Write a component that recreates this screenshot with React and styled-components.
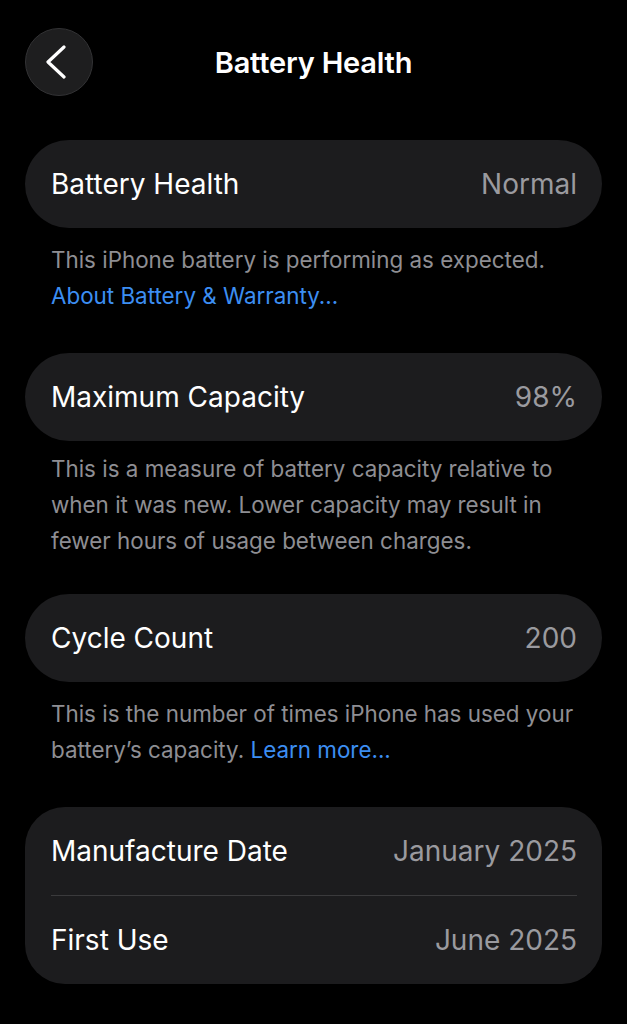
import React from 'react';
import styled, { createGlobalStyle } from 'styled-components';

const GlobalStyle = createGlobalStyle`
    html, body {
        margin: 0;
        padding: 0;
        background: #000;
    }
    body {
        font-family: Inter, "Noto Sans", sans-serif;
        -webkit-font-smoothing: antialiased;
    }
`;

const Screen = styled.div`
    width: 627px;
    min-height: 1024px;
    background: #000;
    color: #fff;
    box-sizing: border-box;
    padding: 28px 25px 0 25px;
`;

const NavBar = styled.div`
    position: relative;
    height: 68px;
    display: flex;
    align-items: center;
    justify-content: center;
    margin-bottom: 44px;
`;

const BackButton = styled.button`
    position: absolute;
    left: 0;
    top: 0;
    width: 68px;
    height: 68px;
    border-radius: 50%;
    background: #1e1e1f;
    border: 1px solid #323234;
    display: flex;
    align-items: center;
    justify-content: center;
    padding: 0;
    padding-right: 4px;
    cursor: pointer;
`;

const Title = styled.h1`
    margin: 0;
    font-size: 29px;
    font-weight: 600;
    letter-spacing: -0.2px;
`;

const Card = styled.div`
    background: #1c1c1e;
    border-radius: ${(p) => (p.$multi ? '40px' : '44px')};
    padding: 0 25px 0 26px;
`;

const Row = styled.div`
    height: 88px;
    display: flex;
    align-items: center;
    justify-content: space-between;
    font-size: 28px;
    border-top: ${(p) => (p.$divider ? '1px solid #3a3a3c' : 'none')};
`;

const Label = styled.span`
    color: #fff;
`;

const Value = styled.span`
    color: #9a9a9f;
`;

const Footer = styled.p`
    margin: 0;
    padding: ${(p) => p.$top || 14}px 24px 0 26px;
    font-size: 22.4px;
    line-height: 36px;
    color: #8e8e93;
    margin-bottom: ${(p) => p.$gap || 39}px;
`;

const Link = styled.a`
    color: #3c8ef2;
    text-decoration: none;
`;

const Chevron = () => (
    <svg width="26" height="34" viewBox="0 0 26 34" fill="none">
        <path
            d="M20 2 L4 17 L20 32"
            stroke="#fff"
            strokeWidth="3.2"
            strokeLinecap="round"
            strokeLinejoin="round"
        />
    </svg>
);

export default function App() {
    return (
        <>
            <GlobalStyle />
            <Screen>
                <NavBar>
                    <BackButton aria-label="Back">
                        <Chevron />
                    </BackButton>
                    <Title>Battery Health</Title>
                </NavBar>

                <Card>
                    <Row>
                        <Label>Battery Health</Label>
                        <Value>Normal</Value>
                    </Row>
                </Card>
                <Footer>
                    This iPhone battery is performing as expected.
                    <br />
                    <Link>About Battery &amp; Warranty...</Link>
                </Footer>

                <Card>
                    <Row>
                        <Label>Maximum Capacity</Label>
                        <Value>98%</Value>
                    </Row>
                </Card>
                <Footer $top={10} $gap={35}>
                    This is a measure of battery capacity relative to when it was new. Lower
                    capacity may result in fewer hours of usage between charges.
                </Footer>

                <Card>
                    <Row>
                        <Label>Cycle Count</Label>
                        <Value>200</Value>
                    </Row>
                </Card>
                <Footer>
                    This is the number of times iPhone has used your battery’s capacity.{' '}
                    <Link>Learn more...</Link>
                </Footer>

                <Card $multi>
                    <Row>
                        <Label>Manufacture Date</Label>
                        <Value>January 2025</Value>
                    </Row>
                    <Row $divider>
                        <Label>First Use</Label>
                        <Value>June 2025</Value>
                    </Row>
                </Card>
            </Screen>
        </>
    );
}
